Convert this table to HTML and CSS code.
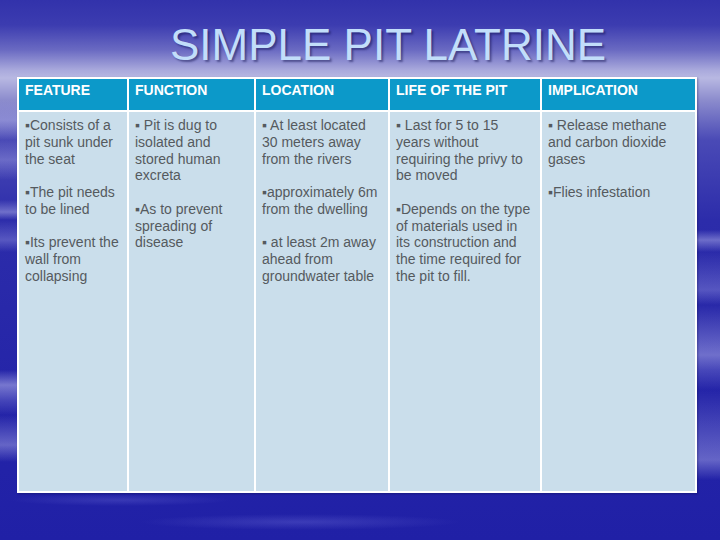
FILE: index.html
```html
<!DOCTYPE html>
<html>
<head>
<meta charset="utf-8">
<title>Simple Pit Latrine</title>
<link rel="stylesheet" href="styles.css">
</head>
<body>
<div class="slide">
  <h1 class="title">SIMPLE PIT LATRINE</h1>
  <table class="grid">
    <colgroup>
      <col class="c1"><col class="c2"><col class="c3"><col class="c4"><col class="c5">
    </colgroup>
    <thead>
      <tr>
        <th>FEATURE</th>
        <th>FUNCTION</th>
        <th>LOCATION</th>
        <th>LIFE OF THE PIT</th>
        <th>IMPLICATION</th>
      </tr>
    </thead>
    <tbody>
      <tr>
        <td>
          <p>▪Consists of a<br>pit sunk under<br>the seat</p>
          <p>▪The pit needs<br>to be lined</p>
          <p>▪Its prevent the<br>wall from<br>collapsing</p>
        </td>
        <td>
          <p>▪ Pit is dug to<br>isolated and<br>stored human<br>excreta</p>
          <p>▪As to prevent<br>spreading of<br>disease</p>
        </td>
        <td>
          <p>▪ At least located<br>30 meters away<br>from the rivers</p>
          <p>▪approximately 6m<br>from the dwelling</p>
          <p>▪ at least 2m away<br>ahead from<br>groundwater table</p>
        </td>
        <td>
          <p>▪ Last for 5 to 15<br>years without<br>requiring the privy to<br>be moved</p>
          <p>▪Depends on the type<br>of materials used in<br>its construction and<br>the time required for<br>the pit to fill.</p>
        </td>
        <td>
          <p>▪ Release methane<br>and carbon dioxide<br>gases</p>
          <p>▪Flies infestation</p>
        </td>
      </tr>
    </tbody>
  </table>
</div>
</body>
</html>
```
FILE: styles.css
```css
html, body {
  margin: 0;
  padding: 0;
}
body {
  width: 720px;
  height: 540px;
  overflow: hidden;
  font-family: "Liberation Sans", Arial, sans-serif;
  background:
    linear-gradient(180deg, rgba(60,60,180,0) 0px, rgba(190,190,240,0.45) 12px, rgba(60,60,180,0) 20px, rgba(170,170,235,0.35) 40px, rgba(60,60,180,0) 52px, rgba(60,60,180,0) 170px, rgba(200,200,245,0.5) 185px, rgba(150,150,225,0.3) 200px, rgba(60,60,180,0) 215px, rgba(200,200,245,0.4) 245px, rgba(60,60,180,0) 262px) 0 200px / 17px 280px no-repeat,
    linear-gradient(180deg, rgba(60,60,180,0) 0px, rgba(190,190,240,0.45) 10px, rgba(60,60,180,0) 22px, rgba(170,170,235,0.35) 60px, rgba(60,60,180,0) 75px, rgba(200,200,245,0.45) 125px, rgba(150,150,225,0.3) 140px, rgba(60,60,180,0) 160px, rgba(200,200,245,0.4) 230px, rgba(60,60,180,0) 250px) 697px 230px / 23px 260px no-repeat,
    linear-gradient(180deg, rgba(60,60,180,0) 0px, rgba(200,200,245,0.35) 20px, rgba(60,60,180,0) 40px, rgba(200,200,245,0.3) 60px, rgba(60,60,180,0) 80px) 0 100px / 17px 100px no-repeat,
    radial-gradient(ellipse 160px 8px at 300px 522px, rgba(110,110,215,0.35), rgba(110,110,215,0) 100%),
    radial-gradient(ellipse 110px 6px at 120px 500px, rgba(110,110,215,0.3), rgba(110,110,215,0) 100%),
    linear-gradient(180deg, #3232ab 0px, #3c3cb0 25px, #6a6ac2 50px, #a9a9dc 70px, #b8b8e2 78px, #8c8ccd 100px, #4a4ab6 140px, #2c2caa 220px, #2424a8 400px, #2020a6 540px);
}
.slide {
  display: flex;
  flex-direction: column;
}
.title {
  margin: 0;
  padding: 23px 0 0 56px;
  height: 77px;
  box-sizing: border-box;
  text-align: center;
  font-weight: normal;
  font-size: 44px;
  line-height: 44px;
  color: #c2defa;
  text-shadow: 2px 2px 2px rgba(10, 10, 70, 0.45);
}
.grid {
  margin-left: 17px;
  width: 680px;
  height: 416px;
  table-layout: fixed;
  border-collapse: separate;
  border-spacing: 2px;
  background: #ffffff;
  box-shadow: 1px 1px 2px rgba(10, 10, 60, 0.35);
}
.c1 { width: 108px; }
.c2 { width: 125px; }
.c3 { width: 132px; }
.c4 { width: 150px; }
.c5 { width: 153px; }
th {
  height: 31px;
  box-sizing: border-box;
  padding: 3px 6px 0;
  background: #0c99c9;
  color: #ffffff;
  font-size: 14px;
  line-height: 16.75px;
  font-weight: bold;
  text-align: left;
  vertical-align: top;
  white-space: nowrap;
}
td {
  padding: 5px 6px 0;
  background: #cadeeb;
  color: #555a5e;
  font-size: 14px;
  line-height: 16.75px;
  vertical-align: top;
  white-space: nowrap;
}
td p {
  margin: 0 0 16.75px;
}
```
